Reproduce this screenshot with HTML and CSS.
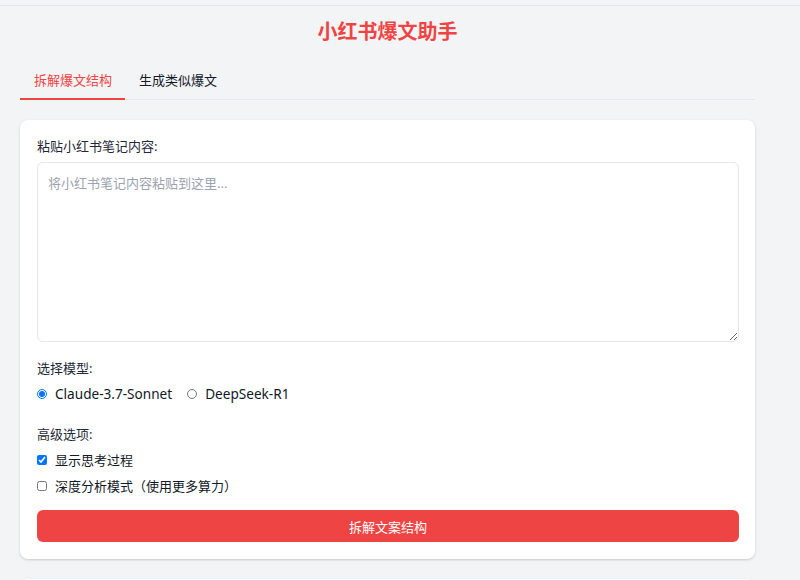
FILE: index.html
```html
<!DOCTYPE html>
<html lang="zh-CN">
<head>
<meta charset="utf-8">
<title>小红书爆文助手</title>
<link rel="stylesheet" href="styles.css">
</head>
<body>
<div class="topbar"></div>
<div class="container">
  <h1 class="title">小红书爆文助手</h1>
  <div class="tabs">
    <div class="tab active">拆解爆文结构</div>
    <div class="tab">生成类似爆文</div>
  </div>
  <div class="card">
    <label class="label">粘贴小红书笔记内容:</label>
    <textarea class="input" placeholder="将小红书笔记内容粘贴到这里..."></textarea>
    <div class="label section">选择模型:</div>
    <div class="radios">
      <label class="opt latin"><input type="radio" name="model" checked><span>Claude-3.7-Sonnet</span></label>
      <label class="opt latin"><input type="radio" name="model"><span>DeepSeek-R1</span></label>
    </div>
    <div class="label section2">高级选项:</div>
    <label class="opt check"><input type="checkbox" checked><span>显示思考过程</span></label>
    <label class="opt check"><input type="checkbox"><span>深度分析模式（使用更多算力）</span></label>
    <button class="btn">拆解文案结构</button>
  </div>
  <div class="card next"></div>
</div>
</body>
</html>
```
FILE: styles.css
```css
* { box-sizing: border-box; }
html, body { margin: 0; padding: 0; }
body {
  background: #f3f4f6;
  font-family: "Noto Sans", "Noto Sans CJK SC", sans-serif;
  color: #1f2937;
  font-size: 13px;
  overflow: hidden;
}
.topbar {
  height: 6px;
  border-bottom: 1px solid #e5e7eb;
}
.container {
  width: 735px;
  margin-left: 20px;
}
.title {
  margin: 12px 0 0;
  text-align: center;
  font-size: 20px;
  line-height: 28px;
  font-weight: 700;
  color: #ef4444;
}
.tabs {
  display: flex;
  margin-top: 14px;
  border-bottom: 1px solid #e5e7eb;
}
.tab {
  padding: 10px 13px 8px 14px;
  line-height: 20px;
  font-size: 13px;
  color: #111827;
  border-bottom: 2px solid transparent;
  margin-bottom: -1px;
}
.tab.active {
  color: #ef4444;
  border-bottom-color: #ef4444;
}
.card {
  margin-top: 20px;
  background: #fff;
  border-radius: 8px;
  box-shadow: 0 1px 3px rgba(0,0,0,0.12), 0 1px 2px rgba(0,0,0,0.06);
  padding: 16px 16px 17px 17px;
  display: flex;
  flex-direction: column;
}
.card.next { height: 60px; }
.label {
  display: block;
  line-height: 20px;
  font-size: 13px;
  color: #1f2937;
}
.input {
  margin-top: 6px;
  height: 180px;
  width: 100%;
  border: 1px solid #e5e7eb;
  border-radius: 6px;
  padding: 10px 10px;
  font-family: inherit;
  font-size: 13px;
  line-height: 20px;
  color: #1f2937;
  resize: vertical;
  outline: none;
}
.input::placeholder { color: #9ca3af; }
.section { margin-top: 16px; }
.section2 { margin-top: 20px; }
.radios {
  display: flex;
  gap: 15px;
  margin-top: 6px;
}
.opt {
  display: flex;
  align-items: center;
  gap: 8px;
  line-height: 20px;
  font-size: 13px;
  color: #111827;
}
.opt.latin { font-size: 13.6px; }
.opt input {
  width: 10px;
  height: 10px;
  margin: 0;
}
.check { margin-top: 6px; }
.btn {
  margin-top: 14px;
  height: 32px;
  width: 100%;
  border: none;
  border-radius: 6px;
  background: #ef4444;
  color: #fff;
  font-family: inherit;
  font-size: 13px;
}
```
